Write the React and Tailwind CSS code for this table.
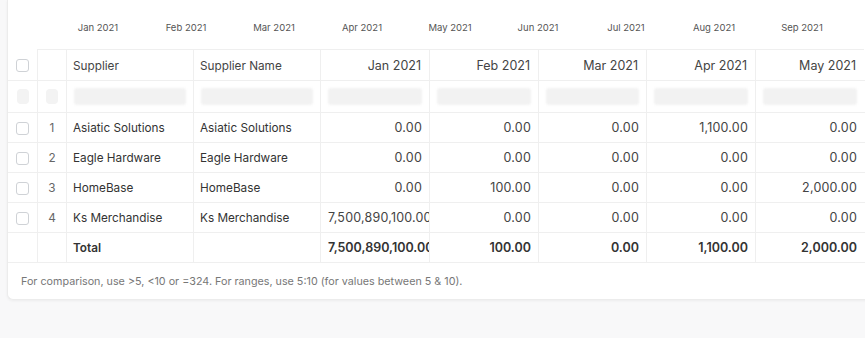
import React from "react";

const months = ["Jan 2021", "Feb 2021", "Mar 2021", "Apr 2021", "May 2021", "Jun 2021", "Jul 2021", "Aug 2021", "Sep 2021"];
const cols = "grid grid-cols-[29px_29px_127px_127px_109px_109px_108px_109px_109px]";

const rows = [
  { n: 1, s: "Asiatic Solutions", v: ["0.00", "0.00", "0.00", "1,100.00", "0.00"] },
  { n: 2, s: "Eagle Hardware", v: ["0.00", "0.00", "0.00", "0.00", "0.00"] },
  { n: 3, s: "HomeBase", v: ["0.00", "100.00", "0.00", "0.00", "2,000.00"] },
  { n: 4, s: "Ks Merchandise", v: ["7,500,890,100.00", "0.00", "0.00", "0.00", "0.00"] },
];
const totals = ["7,500,890,100.00", "100.00", "0.00", "1,100.00", "2,000.00"];

const Check = () => (
  <div className="flex items-center justify-center pt-[2px]">
    <div className="w-[13px] h-[13px] rounded-[3px] border border-[#cfd2d6] bg-white" />
  </div>
);

const App = () => {
  return (
    <div className="h-[338px] w-[865px] overflow-hidden bg-[#f8f8f9] pl-[7px] font-['Inter',sans-serif]">
      <div className="w-[880px] bg-white border-l border-b border-[#ececec] rounded-bl-md shadow-[0_1px_3px_rgba(0,0,0,0.05)]">
        {/* chart axis */}
        <div className="h-[49px] flex items-center pl-[46px] pt-[8px] text-[9.5px] text-[#555]">
          {months.map((m) => (
            <div key={m} className="w-[88px] text-center">{m}</div>
          ))}
        </div>

        <div className="text-[11.75px] text-[#333]">
          {/* header */}
          <div className={`${cols} h-[32px] border-b border-[#efefef]`}>
            <Check />
            <div className="border-l border-t border-[#efefef]" />
            <div className="border-l border-t border-[#efefef] flex items-center pt-[3px] px-[6px] text-[#444]">Supplier</div>
            <div className="border-l border-t border-[#efefef] flex items-center pt-[3px] px-[6px] text-[#444]">Supplier Name</div>
            {months.slice(0, 5).map((m) => (
              <div key={m} className="border-l border-t border-[#efefef] flex items-center justify-end pt-[3px] px-[8px] text-[12.5px] text-[#444]">{m}</div>
            ))}
          </div>

          {/* skeleton filter row */}
          <div className={`${cols} h-[32px] border-b border-[#efefef]`}>
            <div className="flex items-center justify-center"><div className="w-[12px] h-[15px] rounded-sm bg-[#f3f3f3]" /></div>
            <div className="border-l border-[#efefef] flex items-center justify-center"><div className="w-[12px] h-[15px] rounded-sm bg-[#f3f3f3]" /></div>
            {Array.from({ length: 7 }).map((_, i) => (
              <div key={i} className="border-l border-[#efefef] flex items-center px-[7px]">
                <div className="w-full h-[17px] rounded-[3px] bg-[#f2f2f2] blur-[1px]" />
              </div>
            ))}
          </div>

          {rows.map((r) => (
            <div key={r.n} className={`${cols} h-[30px] border-b border-[#efefef]`}>
              <Check />
              <div className="border-l border-[#efefef] flex items-center justify-center pt-[2px] text-[#666]">{r.n}</div>
              <div className="border-l border-[#efefef] flex items-center pt-[2px] px-[6px]">{r.s}</div>
              <div className="border-l border-[#efefef] flex items-center pt-[2px] px-[6px]">{r.s}</div>
              {r.v.map((v, i) => (
                <div key={i} className="border-l border-[#efefef] flex items-center pt-[2px] px-[7px] overflow-hidden">
                  <div className="w-full text-right whitespace-nowrap text-[12.5px] tracking-[0.2px] text-[#444]">{v}</div>
                </div>
              ))}
            </div>
          ))}

          {/* totals */}
          <div className={`${cols} h-[30px] border-b border-[#efefef] font-semibold`}>
            <div />
            <div className="border-l border-[#efefef]" />
            <div className="border-l border-[#efefef] flex items-center pt-[2px] px-[6px]">Total</div>
            <div className="border-l border-[#efefef]" />
            {totals.map((v, i) => (
              <div key={i} className="border-l border-[#efefef] flex items-center pt-[2px] px-[7px] overflow-hidden">
                <div className="w-full text-right whitespace-nowrap text-[12.5px]">{v}</div>
              </div>
            ))}
          </div>
        </div>

        <div className="h-[36px] flex items-center pl-[13px] pt-[2px] text-[10.75px] text-[#777]">
          For comparison, use &gt;5, &lt;10 or =324. For ranges, use 5:10 (for values between 5 &amp; 10).
        </div>
      </div>
    </div>
  );
};

export default App;
